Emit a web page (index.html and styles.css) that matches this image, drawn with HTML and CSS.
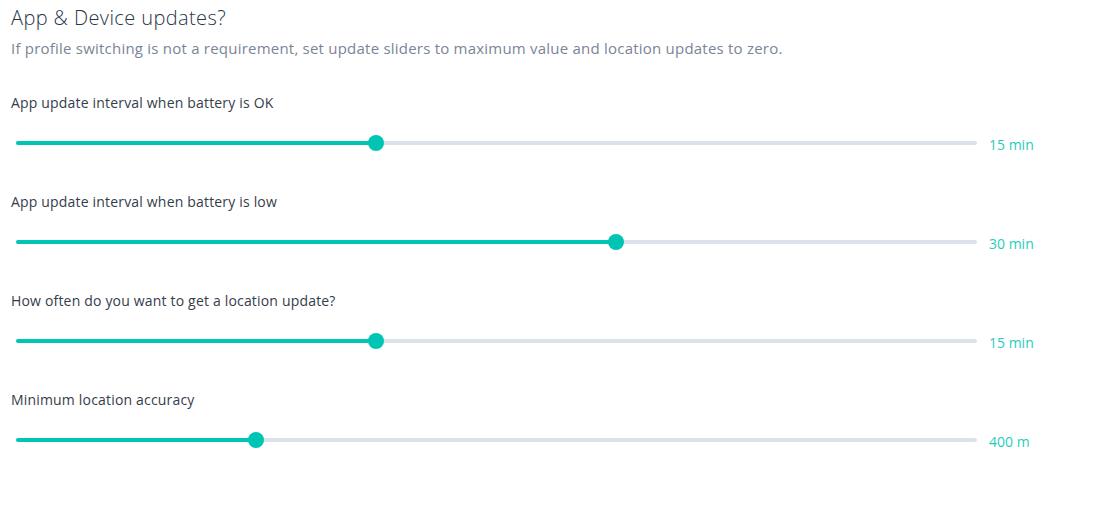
FILE: index.html
```html
<!DOCTYPE html>
<html lang="en">
<head>
    <meta charset="UTF-8">
    <title>App &amp; Device updates</title>
    <link rel="stylesheet" href="styles.css">
</head>
<body>
    <div class="settings">
        <h2 class="title">App &amp; Device updates?</h2>
        <p class="subtitle">If profile switching is not a requirement, set update sliders to maximum value and location updates to zero.</p>

        <div class="setting">
            <div class="setting-label">App update interval when battery is OK</div>
            <div class="slider">
                <div class="track"><div class="fill" style="width:37.46%"><span class="thumb"></span></div></div>
                <span class="value">15 min</span>
            </div>
        </div>

        <div class="setting">
            <div class="setting-label">App update interval when battery is low</div>
            <div class="slider">
                <div class="track"><div class="fill" style="width:62.43%"><span class="thumb"></span></div></div>
                <span class="value">30 min</span>
            </div>
        </div>

        <div class="setting">
            <div class="setting-label">How often do you want to get a location update?</div>
            <div class="slider">
                <div class="track"><div class="fill" style="width:37.46%"><span class="thumb"></span></div></div>
                <span class="value">15 min</span>
            </div>
        </div>

        <div class="setting">
            <div class="setting-label">Minimum location accuracy</div>
            <div class="slider">
                <div class="track"><div class="fill" style="width:24.97%"><span class="thumb"></span></div></div>
                <span class="value">400 m</span>
            </div>
        </div>
    </div>
</body>
</html>
```

FILE: styles.css
```css
body {
    margin: 0;
    font-family: "Open Sans", "Noto Sans", sans-serif;
    background-color: #fff;
    color: #333a48;
}

.settings {
    width: 1048px;
    padding: 6px 0 0 11px;
}

.title {
    margin: 0;
    font-size: 20px;
    font-weight: 300;
    line-height: 24px;
    letter-spacing: 0.4px;
    color: #2a3444;
}

.subtitle {
    margin: 8px 0 0;
    font-size: 15px;
    line-height: 20px;
    letter-spacing: 0.22px;
    color: #7a8597;
}

.setting {
    margin-top: 35px;
}

.setting + .setting {
    margin-top: 39px;
}

.setting-label {
    font-size: 14px;
    line-height: 20px;
    letter-spacing: 0.18px;
    color: #363d4b;
}

.slider {
    display: flex;
    align-items: center;
    gap: 12px;
    height: 20px;
    margin-top: 20px;
    padding-left: 5px;
}

.track {
    flex: 1;
    height: 4px;
    background-color: #dde1ec;
    border-radius: 2px;
}

.fill {
    position: relative;
    height: 100%;
    background-color: #00c4b4;
    border-radius: 2px;
}

.thumb {
    position: absolute;
    right: -8px;
    top: -6px;
    width: 16px;
    height: 16px;
    border-radius: 50%;
    background-color: #00c4b4;
}

.value {
    width: 70px;
    padding-top: 3px;
    font-size: 14px;
    color: #1fcdbc;
}
```
